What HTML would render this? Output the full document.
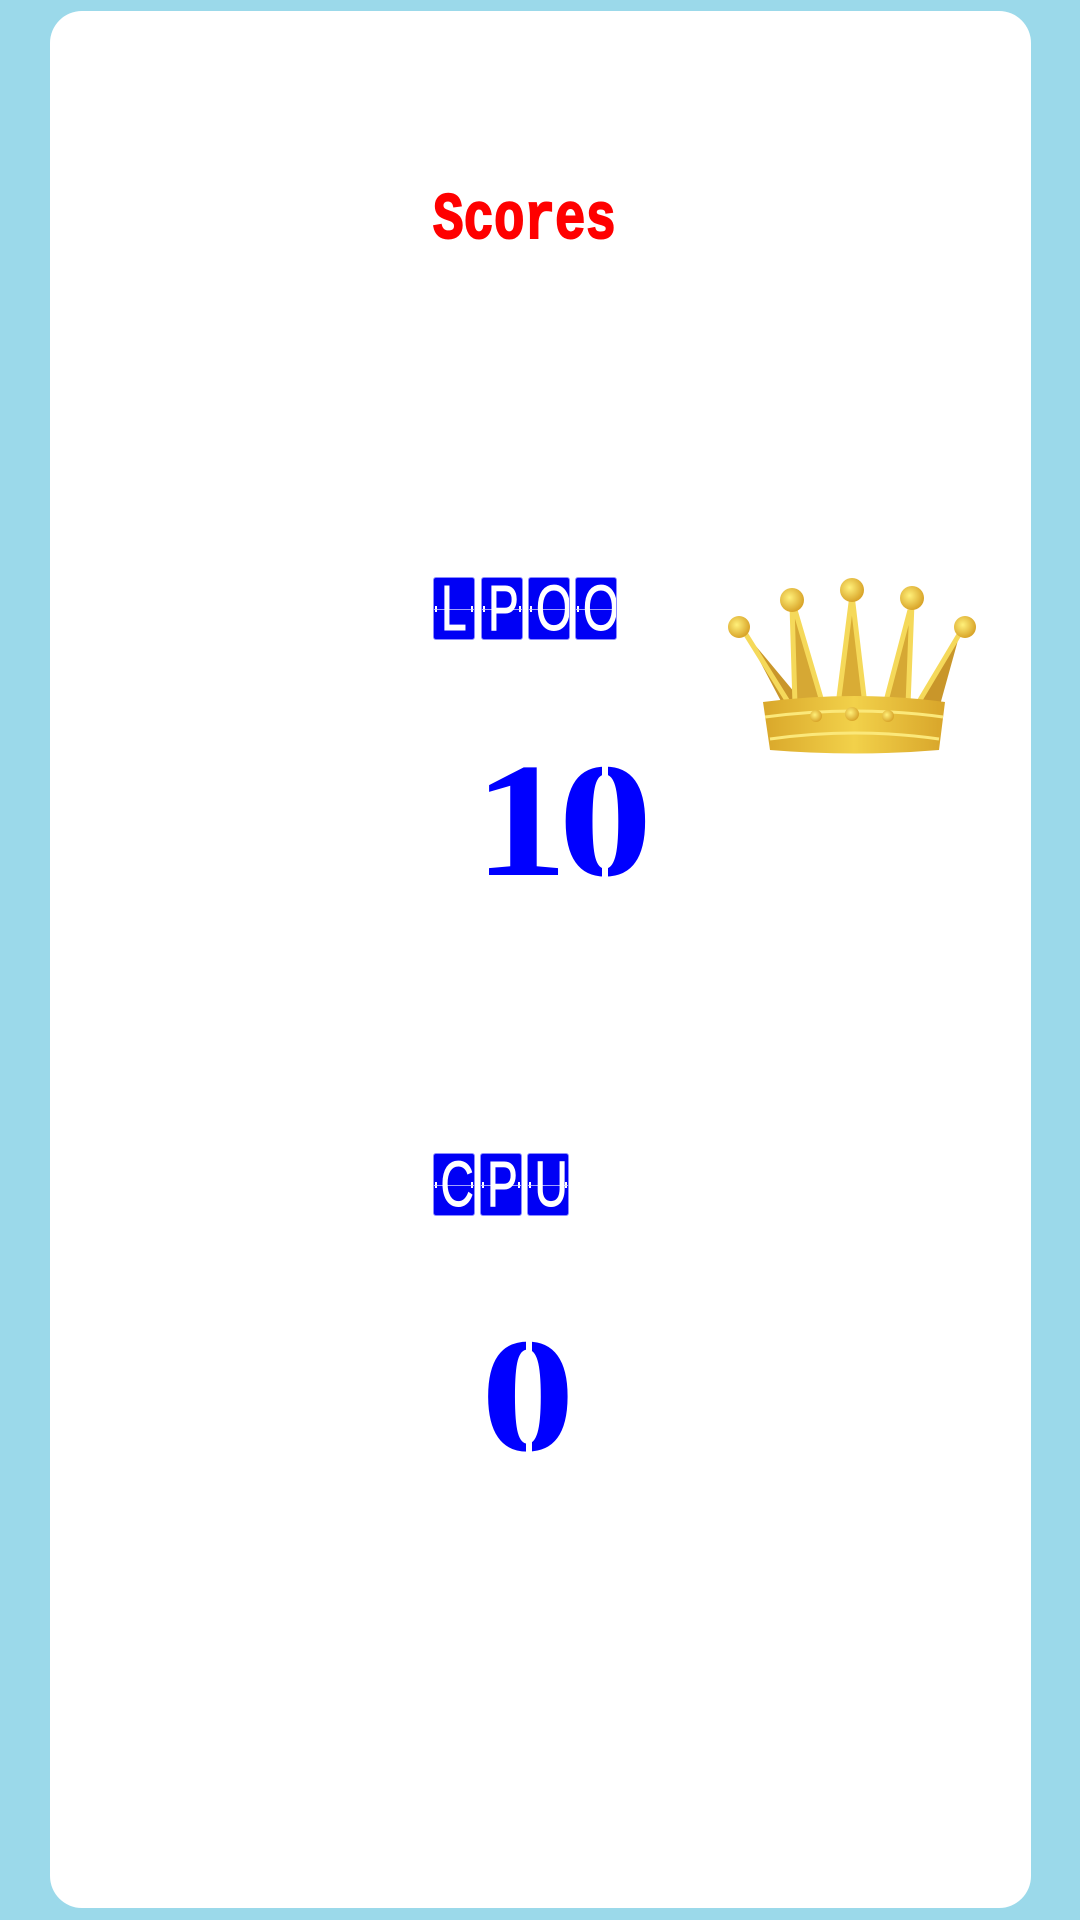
<!DOCTYPE html>
<html><head><meta charset="utf-8">
<style>
html,body{margin:0;padding:0}
body{width:1080px;height:1920px;background:#9bd9ea;position:relative;overflow:hidden}
.card{position:absolute;left:50px;top:11px;width:981px;height:1897px;background:#fff;border-radius:32px}
.scores{position:absolute;left:433px;top:181px;height:80px;font-family:"Liberation Mono",monospace;font-weight:bold;font-size:66px;line-height:80px;color:#f00;white-space:nowrap;transform-origin:0 0;transform:scaleX(0.77);-webkit-text-stroke:2px #f00}
.tile{position:absolute;width:42px;height:63px;background:#0000f5;border:1px solid #8c8cff;border-radius:3px;box-sizing:border-box;color:#fff;font-family:"Liberation Sans",sans-serif;font-size:64px;line-height:61px;text-align:center;overflow:hidden;-webkit-text-stroke:1px #fff}
.tile span{display:inline-block;transform:scaleX(0.72);position:relative;z-index:1}
.tile:after{content:"";position:absolute;left:0;right:0;top:31px;height:1px;background:rgba(200,200,255,.8)}
.tile:before{content:"";position:absolute;left:1px;right:1px;top:28px;height:6px;border-left:2px solid #fff;border-right:2px solid #fff}
.num{position:absolute;font-family:"Liberation Serif",serif;font-weight:bold;color:#00f;font-size:163px;line-height:163px;white-space:nowrap;transform-origin:0 0}
.gap{position:absolute;background:#fff}
</style></head><body>
<div class="card"></div>
<div class="scores">Scores</div>

<div class="tile" style="left:433px;top:577px"><span>L</span></div>
<div class="tile" style="left:481px;top:577px"><span>P</span></div>
<div class="tile" style="left:528px;top:577px"><span>O</span></div>
<div class="tile" style="left:575px;top:577px"><span>O</span></div>

<div class="num" style="left:474px;top:740px;transform:scaleX(1.15);letter-spacing:-8px">10</div>
<div class="gap" style="left:602px;top:762px;width:6px;height:120px"></div>

<svg style="position:absolute;left:715px;top:565px" width="270" height="200" viewBox="710 560 270 200">
<defs>
<linearGradient id="g" x1="0" y1="0" x2="1" y2="0"><stop offset="0" stop-color="#d9a72a"/><stop offset=".5" stop-color="#f2d14a"/><stop offset="1" stop-color="#d8a52a"/></linearGradient>
<radialGradient id="b" cx=".4" cy=".4" r=".6"><stop offset="0" stop-color="#fff07a"/><stop offset="1" stop-color="#d9a52a"/></radialGradient>
</defs>
<path d="M740 628 L778 700 L800 700 Z" fill="#c9962a"/>
<path d="M787 600 L792 700 L820 700 Z" fill="#d6a834"/>
<path d="M847 590 L832 700 L862 700 Z" fill="#d9ac35"/>
<path d="M907 598 L880 700 L905 700 Z" fill="#d6a834"/>
<path d="M955 628 L912 700 L935 700 Z" fill="#c9962a"/>
<g stroke="#f5d95a" stroke-width="5" fill="none">
<path d="M740 628 L785 700"/><path d="M787 600 L790 700 M790 605 L818 700"/>
<path d="M847 590 L833 700 M847 590 L860 700"/>
<path d="M907 598 L903 700 M905 605 L880 700"/>
<path d="M955 628 L912 700"/>
</g>
<path d="M758 697 Q850 685 940 697 L934 745 Q850 752 765 745 Z" fill="url(#g)"/>
<path d="M760 712 Q850 700 938 712" stroke="#fbe87a" stroke-width="3" fill="none"/>
<path d="M765 734 Q850 722 934 734" stroke="#fbe87a" stroke-width="3" fill="none"/>
<circle cx="811" cy="711" r="6" fill="url(#b)"/><circle cx="847" cy="709" r="7" fill="url(#b)"/><circle cx="883" cy="711" r="6" fill="url(#b)"/>
<circle cx="734" cy="622" r="11" fill="url(#b)"/>
<circle cx="787" cy="595" r="12" fill="url(#b)"/>
<circle cx="847" cy="585" r="12" fill="url(#b)"/>
<circle cx="907" cy="593" r="12" fill="url(#b)"/>
<circle cx="960" cy="622" r="11" fill="url(#b)"/>
</svg>

<div class="tile" style="left:433px;top:1153px"><span>C</span></div>
<div class="tile" style="left:480px;top:1153px"><span>P</span></div>
<div class="tile" style="left:527px;top:1153px"><span>U</span></div>

<div class="num" style="left:481px;top:1315px;transform:scaleX(1.15)">0</div>
<div class="gap" style="left:526px;top:1336px;width:6px;height:124px"></div>
</body></html>
